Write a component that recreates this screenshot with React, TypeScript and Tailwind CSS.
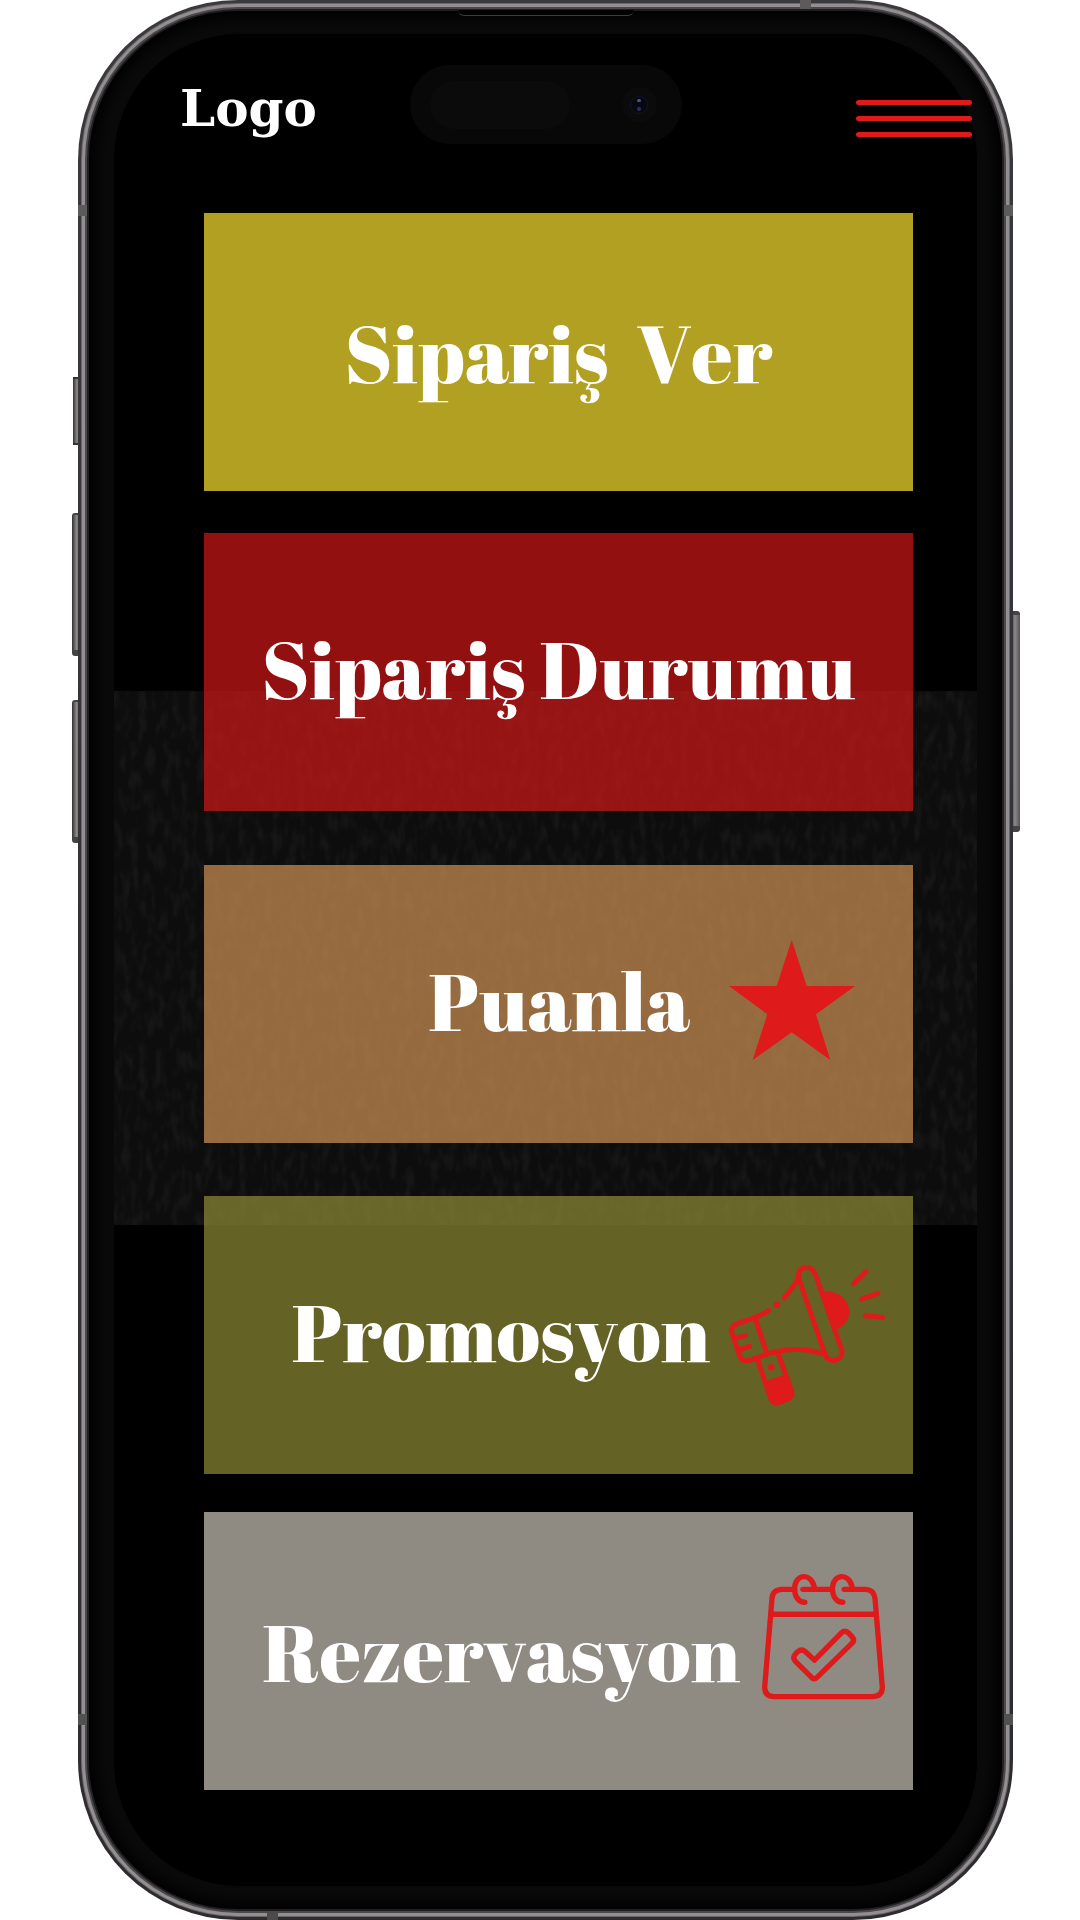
import React from "react";

const RED = "#df1a1a";

function StarIcon() {
  return (
    <svg viewBox="90 60 378 360" className="h-[120px] w-[126px] shrink-0" aria-hidden="true">
      <polygon
        fill={RED}
        points="278,60 323,198 468,198 351,283 394,420 278,337 161,420 205,283 90,198 233,198"
      />
    </svg>
  );
}

function MegaphoneIcon() {
  return (
    <svg
      viewBox="87 75 469 423"
      className="mt-2 h-[141px] w-[156px] shrink-0"
      fill="none"
      stroke={RED}
      strokeWidth="15"
      strokeLinecap="round"
      strokeLinejoin="round"
      aria-hidden="true"
    >
      <path d="M296 113 C289 76 337 70 347 104 L426 330 C434 356 394 376 377 347 Z" />
      <path d="M296 115 Q278 144 253 173" />
      <path d="M206 212 Q190 222 166 232 L112 251 Q89 260 96 280 L119 347 Q126 367 148 361 L204 342 Q290 314 377 344" />
      <path d="M166 236 L200 338" />
      <path d="M109 294 L137 286 M121 328 L149 319" />
      <path d="M172 356 L212 474 Q219 495 239 487 L261 479 Q281 471 275 452 L235 342" />
      <path
        fill={RED}
        stroke="none"
        d="M199 423 L250 405 L281 454 Q285 475 263 484 L239 493 Q214 497 207 476 Z"
      />
      <circle cx="214" cy="382" r="10" fill={RED} stroke="none" />
      <circle cx="231" cy="194" r="10" fill={RED} stroke="none" />
      <path fill={RED} stroke="none" d="M366 156 C404 147 439 169 447 203 C453 233 437 258 408 269 Z" />
      <path d="M462 131 L499 94 M486 177 L535 160 M497 227 L549 232" />
    </svg>
  );
}

function CalendarIcon() {
  return (
    <svg
      viewBox="65 68 370 380"
      className="mb-[30px] h-[127px] w-[123px] shrink-0"
      fill="none"
      stroke={RED}
      strokeWidth="16"
      strokeLinecap="round"
      strokeLinejoin="round"
      aria-hidden="true"
    >
      <path d="M163 116 H125 Q97 117 95 144 L73 411 Q74 438 101 439 H400 Q427 437 427 411 L405 144 Q402 117 377 116 H312" />
      <path d="M188 116 H273" />
      <path d="M97 191 H403" />
      <path d="M222 108 C212 64 163 70 163 115 C163 140 177 155 194 155" />
      <path d="M336 108 C326 64 277 70 277 115 C277 140 291 155 308 155" />
      <path d="M165 332 L212 379 Q222 391 233 379 L336 278 Q345 269 336 259 L325 247 Q314 238 304 247 L223 329 L195 303 Q184 294 173 303 L165 311 Q156 322 165 332 Z" />
    </svg>
  );
}

function MenuCard({
  label,
  className,
  children,
}: {
  label: string;
  className: string;
  children?: React.ReactNode;
}) {
  return (
    <button
      type="button"
      className={
        "flex h-[278px] w-full items-center whitespace-pre font-['Abril_Fatface','Liberation_Serif',serif] text-[80px] leading-none font-normal text-white [font-kerning:none] " +
        className
      }
    >
      <span>{label}</span>
      {children}
    </button>
  );
}

function BackgroundTexture() {
  return (
    <div className="absolute inset-x-0 top-[35.5%] bottom-[35.7%] overflow-hidden bg-[#0d0d0d]">
      <svg className="h-full w-full opacity-5" aria-hidden="true">
        <filter id="grain">
          <feTurbulence type="fractalNoise" baseFrequency="0.12 0.05" numOctaves="2" seed="4" />
          <feColorMatrix values="0 0 0 0 0.5  0 0 0 0 0.5  0 0 0 0 0.5  3 0 0 0 -1.3" />
        </filter>
        <rect width="100%" height="100%" filter="url(#grain)" />
      </svg>
    </div>
  );
}

const SIDE = "absolute bg-linear-to-r from-[#333] via-[#8d888a] to-[#555]";

export default function App() {
  return (
    <div className="min-h-screen bg-white pr-[67px] pl-[78px]">
      <div className="relative">
        <div className={SIDE + " top-[377px] -left-[5px] h-[68px] w-[8px] border-y-2 border-[#333]"} />
        <div className={SIDE + " top-[513px] -left-[6px] h-[143px] w-[9px] rounded-l-[3px] border-t-2 border-b-6 border-[#444]"} />
        <div className={SIDE + " top-[700px] -left-[6px] h-[143px] w-[9px] rounded-l-[3px] border-t-2 border-b-6 border-[#444]"} />
        <div className={SIDE + " top-[611px] -right-[7px] h-[221px] w-[10px] rounded-r-[3px] border-t-4 border-b-6 border-[#444]"} />

        <div className="relative overflow-hidden rounded-[160px] bg-linear-to-b from-[#3a3a3c] to-[#2c2c2e] p-[3px]">
          <div className="rounded-[157px] bg-[#6b6769] p-px">
            <div className="rounded-[156px] bg-[#938e91] p-[3px]">
              <div className="rounded-[153px] bg-[#4a484a] p-[2px]">
                <div className="rounded-[151px] bg-[#1f1f20] p-[2px]">
                  <div className="rounded-[149px] bg-[#0a0a0a] px-[25px] py-[23px] shadow-[inset_0_0_16px_6px_#000]">
                    <main className="relative overflow-hidden rounded-[125px] bg-black pb-24">
                      <BackgroundTexture />
                      <div className="relative h-[179px]" />
                      <nav aria-label="Menü" className="relative flex flex-col pr-[64px] pl-[90px]">
                        <MenuCard label="Sipariş  Ver" className="justify-center bg-[#b1a021]" />
                        <MenuCard
                          label="Sipariş Durumu"
                          className="mt-[42px] justify-center bg-[#df1919]/66 pb-2"
                        />
                        <MenuCard
                          label="Puanla"
                          className="mt-[54px] justify-end gap-[39px] bg-[#dc9b58]/66 pr-[58px] pb-2"
                        >
                          <StarIcon />
                        </MenuCard>
                        <MenuCard
                          label="Promosyon"
                          className="mt-[53px] justify-end gap-[19px] bg-[#989437]/66 pr-[28px] pb-2"
                        >
                          <MegaphoneIcon />
                        </MenuCard>
                        <MenuCard
                          label="Rezervasyon"
                          className="mt-[38px] justify-end gap-[22px] bg-[#8f8a82] pr-[28px]"
                        >
                          <CalendarIcon />
                        </MenuCard>
                      </nav>
                    </main>
                  </div>
                </div>
              </div>
            </div>
          </div>

          <div className="absolute top-0 left-[722px] h-[9px] w-[11px] bg-[#5c5a5b]" />
          <div className="absolute bottom-0 left-[189px] h-[9px] w-[11px] bg-[#4c4b4c]" />
          <div className="absolute top-[205px] left-0 h-[11px] w-[9px] bg-[#5c5b5c]" />
          <div className="absolute top-[205px] right-0 h-[11px] w-[9px] bg-[#5c5b5c]" />
          <div className="absolute bottom-[195px] left-0 h-[11px] w-[9px] bg-[#525152]" />
          <div className="absolute right-0 bottom-[195px] h-[11px] w-[9px] bg-[#525152]" />
          <div className="absolute top-[10px] left-1/2 h-[6px] w-[176px] -translate-x-1/2 rounded-b-[8px] border-b border-[#3a3d3d] bg-black" />
        </div>

        <header className="absolute inset-x-0 top-0 flex items-start justify-between pt-[84px] pr-[41px] pl-[102px]">
          <a href="#" className="font-['DejaVu_Serif',serif] text-[50px] leading-[50px] font-bold text-white">
            Logo
          </a>
          <button type="button" aria-label="Menüyü aç" className="mt-4 flex w-[116px] flex-col gap-[11px]">
            <span className="h-[5px] w-full rounded-full bg-[#df1a1a]" />
            <span className="h-[5px] w-full rounded-full bg-[#df1a1a]" />
            <span className="h-[5px] w-full rounded-full bg-[#df1a1a]" />
          </button>
        </header>

        <div className="absolute top-[65px] left-1/2 flex h-[79px] w-[272px] -translate-x-1/2 items-center justify-between rounded-full bg-[#080808] pr-[25px] pl-[20px]">
          <div className="h-[48px] w-[140px] rounded-full bg-[#0b0b0b]" />
          <div className="flex h-[35px] w-[35px] items-center justify-center rounded-full bg-[#0b0b0b]">
            <div className="flex h-[18px] w-[18px] flex-col items-center justify-center gap-[5px] rounded-full border border-[#12122e] bg-[#08080f]">
              <span className="h-[3px] w-[4px] rounded-full bg-[#5a4a8a]" />
              <span className="h-[4px] w-[4px] rounded-full bg-[#302c70]" />
            </div>
          </div>
        </div>
      </div>
    </div>
  );
}
